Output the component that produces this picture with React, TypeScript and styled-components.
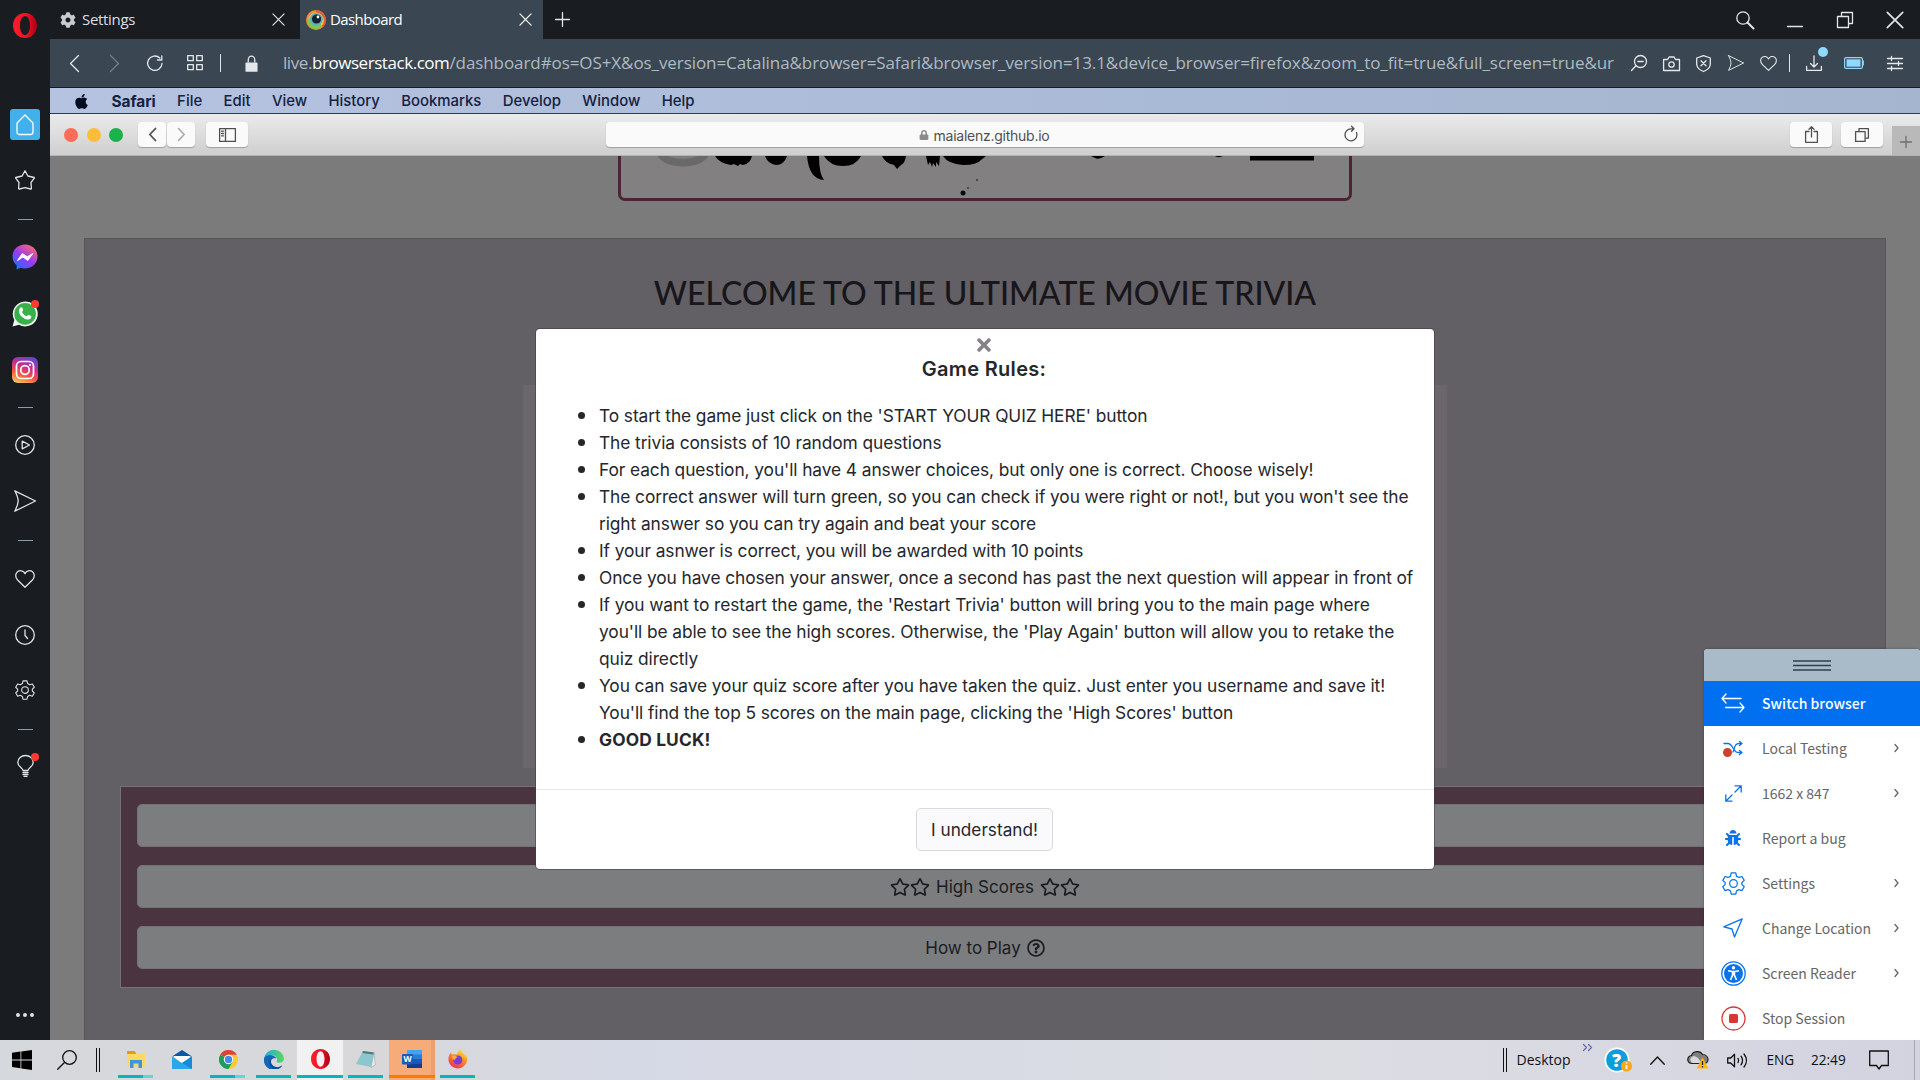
import React from "react";
import styled, { createGlobalStyle, css } from "styled-components";
import { FaApple, FaBug, FaCog, FaLock, FaRegQuestionCircle, FaRegStar, FaTimes } from "react-icons/fa";

const GlobalStyle = createGlobalStyle`
  * { box-sizing: border-box; }
  html, body { margin: 0; padding: 0; overflow: hidden; }
  svg { display: block; flex: none; }
`;

const segoe = `"Open Sans", "Noto Sans", sans-serif`;
const mac = `Inter, "Liberation Sans", sans-serif`;

/* ---------- shell ---------- */

const Screen = styled.div`
  width: 1920px;
  height: 1080px;
  display: flex;
  flex-direction: column;
  overflow: hidden;
  background: #191d21;
  font-family: ${segoe};
`;
const Main = styled.div`
  display: flex;
  height: 1040px;
`;
const Browser = styled.div`
  flex: 1;
  min-width: 0;
  display: flex;
  flex-direction: column;
`;
const Line = styled.svg`
  fill: none;
  stroke: currentColor;
  stroke-width: 1.3;
  stroke-linecap: round;
  stroke-linejoin: round;
  overflow: visible;
`;

/* ---------- opera rail ---------- */

const Rail = styled.nav`
  width: 50px;
  display: flex;
  flex-direction: column;
  align-items: center;
  background: #191d21;
  color: #dfe3e6;
`;
const RailSlot = styled.div<{ $gap: number }>`
  position: relative;
  width: 30px;
  height: 30px;
  flex: none;
  margin-top: ${(p) => p.$gap}px;
  display: flex;
  align-items: center;
  justify-content: center;
`;
const RailHome = styled(RailSlot)`
  height: 31px;
  border-radius: 3px;
  background: #42b0ea;
  color: #fff;
`;
const RailMore = styled(RailSlot)`
  margin-top: auto;
  margin-bottom: 10px;
`;
const RailRule = styled.div<{ $gap: number }>`
  width: 15px;
  height: 2px;
  flex: none;
  margin-top: ${(p) => p.$gap}px;
  border-bottom: 1px solid #8b9ca6;
`;
const AlertDot = styled.span<{ $top?: number }>`
  position: absolute;
  right: 1px;
  top: ${(p) => p.$top ?? 0}px;
  width: 8px;
  height: 8px;
  border-radius: 50%;
  background: #ff3b30;
`;

/* ---------- tabs and address bar ---------- */

const TabStrip = styled.div`
  height: 39px;
  display: flex;
  align-items: center;
  color: #e4e6e8;
`;
const Tab = styled.div<{ $active?: boolean }>`
  width: ${(p) => (p.$active ? 243 : 250)}px;
  height: 39px;
  padding: 0 11px 0 ${(p) => (p.$active ? 6 : 10)}px;
  display: flex;
  align-items: center;
  font-size: 15px;
  letter-spacing: ${(p) => (p.$active ? -0.6 : -0.32)}px;
  color: ${(p) => (p.$active ? "#fff" : "#dcdfe1")};
  background: ${(p) => (p.$active ? "#3a4651" : "#191d21")};
`;
const TabTitle = styled.span<{ $gap: number }>`
  flex: 1;
  margin-left: ${(p) => p.$gap}px;
  padding-bottom: 1px;
`;
const NewTab = styled.div`
  flex: 1;
  padding-left: 12px;
`;
const WindowButtons = styled.div`
  display: flex;
  align-items: center;
  > * { width: 50px; display: flex; justify-content: center; }
`;
const AddressBar = styled.div`
  height: 49px;
  padding: 0 5px;
  display: flex;
  align-items: center;
  background: #3a4651;
  border-bottom: 1px solid #161b20;
  color: #e4e8eb;
`;
const Slot = styled.div<{ $w: number; $dim?: boolean }>`
  position: relative;
  width: ${(p) => p.$w}px;
  flex: none;
  display: flex;
  justify-content: center;
  opacity: ${(p) => (p.$dim ? 0.35 : 1)};
`;
const Separator = styled.div`
  width: 1px;
  height: 18px;
  background: #dfe3e6;
`;
const Url = styled.div`
  flex: 1;
  min-width: 0;
  overflow: hidden;
  white-space: nowrap;
  padding-left: 6px;
  font-size: 17px;
  line-height: 26px;
  letter-spacing: -0.08px;
  color: #afbac3;
`;
const UrlScheme = styled.span`
  letter-spacing: -0.42px;
`;
const UrlHost = styled.span`
  letter-spacing: -0.45px;
  color: #fff;
`;
const DownloadDot = styled.span`
  position: absolute;
  right: 6px;
  top: -8px;
  width: 10px;
  height: 10px;
  border-radius: 50%;
  background: #8fd8ff;
`;

/* ---------- mac desktop ---------- */

const MacMenu = styled.div`
  height: 26px;
  padding: 1px 0 0 23px;
  display: flex;
  align-items: center;
  gap: 21.4px;
  background: linear-gradient(90deg, #b6c3e0, #a9bad6 60%, #a6b5cf);
  border-bottom: 1px solid #2c3c56;
  color: #142140;
  font: 500 14.9px ${mac};
`;
const MacAppName = styled.span`
  font-weight: 700;
  font-size: 15.4px;
`;
const SafariBar = styled.div`
  height: 42px;
  display: flex;
  align-items: center;
  background: linear-gradient(#ebebeb, #cfcfcf);
  border-bottom: 1px solid #b4b4b4;
  color: #505052;
`;
const Lights = styled.div`
  display: flex;
  gap: 8.5px;
  margin-left: 14px;
`;
const Light = styled.span<{ $c: string }>`
  width: 14px;
  height: 14px;
  border-radius: 50%;
  background: ${(p) => p.$c};
`;
const MacButton = styled.div<{ $w: number; $ml: number; $dim?: boolean }>`
  width: ${(p) => p.$w}px;
  height: 25px;
  margin-left: ${(p) => p.$ml}px;
  display: flex;
  align-items: center;
  justify-content: center;
  border-radius: 4px;
  background: #fafafa;
  box-shadow: 0 1px 1px rgba(0, 0, 0, 0.25);
  color: ${(p) => (p.$dim ? "#aaaaaa" : "#505052")};
`;
const SafariField = styled(MacButton)`
  flex: none;
  position: relative;
  gap: 5px;
  padding: 1px 2px 0 0;
  font: 14px ${mac};
  letter-spacing: -0.25px;
`;
const FieldReload = styled.span`
  position: absolute;
  right: 6px;
  top: 4px;
`;
const MacNewTab = styled.div`
  width: 28px;
  height: 29px;
  margin-left: 9px;
  padding-top: 2px;
  align-self: flex-end;
  display: flex;
  align-items: center;
  justify-content: center;
  background: #b9b9ba;
  color: #6e6e6e;
`;

/* ---------- page behind the dialog ---------- */

const Page = styled.div`
  position: relative;
  height: 884px;
  overflow: hidden;
  padding: 0 34px;
  display: flex;
  flex-direction: column;
  align-items: center;
  background: #7b7b7b;
`;
const LogoBox = styled.div`
  width: 734px;
  height: 45px;
  flex: none;
  overflow: hidden;
  background: #828081;
  border: 3px solid #4b2535;
  border-top: 0;
  border-radius: 0 0 7px 7px;
`;
const Board = styled.section`
  width: 1802px;
  height: 820px;
  flex: none;
  margin-top: 37px;
  padding: 0 35px;
  display: flex;
  flex-direction: column;
  align-items: center;
  background: #625f65;
  border: 1px solid #57545a;
`;
const Title = styled.h1`
  margin: 30px 0 0;
  height: 48px;
  font: 500 32px/48px Lato, sans-serif;
  color: #17161a;
  white-space: nowrap;
`;
const Picture = styled.div`
  width: 924px;
  height: 383px;
  margin-top: 68px;
  background: #6b666c;
`;
const Choices = styled.div`
  width: 1730px;
  height: 202px;
  margin-top: 18px;
  padding: 17px 16px;
  display: flex;
  flex-direction: column;
  gap: 18px;
  background: #4a3440;
  border: 1px solid #757177;
`;
const Choice = styled.div`
  height: 43px;
  padding-top: 1px;
  display: flex;
  align-items: center;
  justify-content: center;
  gap: 6px;
  border-radius: 5px;
  background: #7c7d7f;
  font: 17px ${mac};
  color: #1b1c20;
  border: 1px solid #737377;
`;
const Stars = styled.span`
  display: flex;
`;

/* ---------- rules dialog ---------- */

const Dialog = styled.div`
  position: absolute;
  left: 486px;
  top: 173px;
  width: 898px;
  height: 540px;
  display: flex;
  flex-direction: column;
  background: #fff;
  border-radius: 4px;
  box-shadow: 0 0 0 1px rgba(60, 58, 62, 0.5);
  color: #25272c;
  font-family: ${mac};
`;
const DialogClose = styled.div`
  height: 23px;
  padding: 6px 2px 0 0;
  display: flex;
  justify-content: center;
  color: #858387;
`;
const DialogTitle = styled.h2`
  margin: 1px 2px 0 0;
  text-align: center;
  font: 600 20px/32px ${mac};
  letter-spacing: 0.32px;
`;
const Rules = styled.ul`
  margin: 17px 0 0;
  padding: 0 0 0 63px;
  font-size: 17.35px;
  line-height: 27px;
  letter-spacing: -0.09px;
  white-space: pre-line;
  list-style: none;
`;
const Rule = styled.li<{ $strong?: boolean }>`
  display: flex;
  font-weight: ${(p) => (p.$strong ? 700 : 400)};
  letter-spacing: ${(p) => (p.$strong ? "0.15px" : "inherit")};
  &::before {
    content: "";
    width: 7px;
    height: 7px;
    flex: none;
    margin: 10px 14px 0 -21px;
    border-radius: 50%;
    background: #25272c;
  }
`;
const DialogFooter = styled.div`
  height: 80px;
  margin-top: auto;
  padding-right: 1px;
  display: flex;
  align-items: center;
  justify-content: center;
  border-top: 1px solid #e9e9ea;
`;
const Understand = styled.button`
  width: 137px;
  height: 43px;
  padding: 0;
  border: 1px solid #d9d9dc;
  border-radius: 5px;
  background: #fafafc;
  color: #25272c;
  font: 17.2px ${mac};
`;

/* ---------- session menu ---------- */

const Session = styled.aside`
  position: absolute;
  right: 0;
  top: 493px;
  width: 216px;
  height: 391px;
  overflow: hidden;
  border-radius: 4px 4px 0 0;
  background: #fff;
  box-shadow: 0 0 3px rgba(0, 0, 0, 0.3);
  font-family: "Noto Sans CJK SC", "Noto Sans", sans-serif;
`;
const Grip = styled.div`
  height: 32px;
  display: flex;
  align-items: center;
  justify-content: center;
  background: #a9bac8;
  color: #2e404e;
`;
const SessionRow = styled.div<{ $active?: boolean }>`
  height: 45px;
  padding: 0 21px 1px 16px;
  display: flex;
  align-items: center;
  font-size: 14px;
  color: #666;
  ${(p) =>
    p.$active &&
    css`
      background: #0070f0;
      color: #fff;
      font-weight: 500;
    `}
`;
const SessionIcon = styled.span<{ $c: string }>`
  position: relative;
  width: 26px;
  margin-right: 16px;
  display: flex;
  justify-content: center;
  color: ${(p) => p.$c};
`;
const SessionLabel = styled.span`
  flex: 1;
  white-space: nowrap;
`;
const OfflineDot = styled.span`
  position: absolute;
  left: 3px;
  bottom: -2px;
  width: 9px;
  height: 9px;
  border-radius: 50%;
  background: #d0402f;
`;

/* ---------- taskbar ---------- */

const Taskbar = styled.footer`
  height: 40px;
  display: flex;
  align-items: center;
  background: linear-gradient(90deg, #d5d8dc, #d8d8da 20%, #d5d9e5 32%, #dcdde3 70%, #d3d3e0);
  color: #111;
`;
const TaskButton = styled.div<{ $state?: "open" | "many" | "active" | "alert" }>`
  position: relative;
  width: 46px;
  height: 40px;
  padding-bottom: 2px;
  display: flex;
  align-items: center;
  justify-content: center;
  background: ${(p) => (p.$state === "active" ? "#f1f1f2" : p.$state === "alert" ? "#f7ab78" : "none")};
  box-shadow: ${(p) => (p.$state === "alert" ? "inset -4px 0 0 #eda06d" : "none")};
  &::after {
    content: "";
    display: ${(p) => (p.$state ? "block" : "none")};
    position: absolute;
    bottom: 2px;
    left: ${(p) => (p.$state === "active" || p.$state === "alert" ? 0 : 5)}px;
    right: ${(p) => (p.$state === "active" || p.$state === "alert" ? 0 : 6)}px;
    height: 3px;
    background: ${(p) =>
      p.$state === "alert" ? "#ff7800" : p.$state === "many" ? "linear-gradient(90deg,#00b6c1 72%,#62d4da 72%)" : "#00b6c1"};
  }
`;
const DoubleBar = styled.div`
  width: 4px;
  height: 24px;
  border: solid #111;
  border-width: 0 1px;
`;
const Tray = styled.div`
  margin-left: auto;
  display: flex;
  align-items: center;
  font-size: 14px;
`;
const TrayText = styled.span<{ $w: number; $small?: boolean }>`
  width: ${(p) => p.$w}px;
  padding-bottom: 1px;
  font-size: ${(p) => (p.$small ? 13.6 : 14)}px;
  white-space: nowrap;
`;
const Chevrons = styled.span`
  width: 18px;
  align-self: flex-start;
  padding-top: 4px;
  color: #6b68b0;
`;
const DesktopEdge = styled.div`
  width: 6px;
  height: 40px;
  border-left: 1px solid #a9a9b6;
`;

/* ---------- shared drawings ---------- */

const Heart = ({ s = 20 }: { s?: number }) => (
  <Line width={s} height={s} viewBox="0 0 20 20"><path d="M10 18.2 2.6 11C0 8.200 .2 4.700 2.500 2.800 5 .8 8.500 1.600 10 4.600 11.500 1.600 15 .8 17.500 2.800 19.800 4.700 20 8.200 17.400 11Z" /></Line>
);
const Send = ({ s = 22 }: { s?: number }) => (
  <Line width={s} height={s} viewBox="0 0 22 22"><path d="M.8.8 21.500 11 .8 21.200Q4 15 4.200 11 4 7 .8.8Z" /></Line>
);
const Cross = ({ s }: { s: number }) => (
  <Line width={s} height={s} viewBox="0 0 14 14"><path d="M1 1 13 13M13 1 1 13" /></Line>
);
const Gear = ({ s }: { s: number }) => (
  <Line width={s} height={s} viewBox="0 0 24 24"><circle cx="12" cy="12" r="4" /><path d="M9.600 1h4.800l.7 3.300 2.500 1.400 3.200-1 2.400 4-2.400 2.200v2.300l2.400 2.200-2.400 4-3.200-1-2.500 1.400-.7 3.200H9.600l-.7-3.200-2.500-1.400-3.200 1-2.400-4 2.400-2.200v-2.300L.8 8.700l2.400-4 3.200 1 2.500-1.400Z" /></Line>
);
const OperaMark = ({ w, h }: { w: number; h: number }) => (
  <svg width={w} height={h} viewBox="0 0 24 30" preserveAspectRatio="none">
    <defs><linearGradient id="op" x1="0" x2="1"><stop offset="0" stopColor="#ff1b2d" /><stop offset=".55" stopColor="#f01424" /><stop offset="1" stopColor="#a70014" /></linearGradient></defs>
    <path fillRule="evenodd" fill="url(#op)" d="M12 0C5.400 0 0 6.500 0 15s5.400 15 12 15 12-6.500 12-15S18.600 0 12 0Zm0 3.500c3 0 5 5 5 11.500s-2 11.500-5 11.500S7 21.500 7 15 9 3.500 12 3.500Z" />
  </svg>
);
const Lock = ({ w, h }: { w: number; h: number }) => (
  <svg width={w} height={h} viewBox="0 0 14 18" fill="none"><rect x=".5" y="8" width="13" height="10" rx="1" fill="currentColor" /><path d="M3.500 8V5a3.500 4 0 0 1 7 0v3" stroke="currentColor" strokeWidth="1.400" /></svg>
);

const rules: string[] = [
  "To start the game just click on the 'START YOUR QUIZ HERE' button",
  "The trivia consists of 10 random questions",
  "For each question, you'll have 4 answer choices, but only one is correct. Choose wisely!",
  "The correct answer will turn green, so you can check if you were right or not!, but you won't see the\nright answer so you can try again and beat your score",
  "If your asnwer is correct, you will be awarded with 10 points",
  "Once you have chosen your answer, once a second has past the next question will appear in front of",
  "If you want to restart the game, the 'Restart Trivia' button will bring you to the main page where\nyou'll be able to see the high scores. Otherwise, the 'Play Again' button will allow you to retake the\nquiz directly",
  "You can save your quiz score after you have taken the quiz. Just enter you username and save it!\nYou'll find the top 5 scores on the main page, clicking the 'High Scores' button",
];

const blue = "#0b73e8";
type Entry = { label: string; icon: React.ReactNode; color?: string; more?: boolean; active?: boolean };
const entries: Entry[] = [
  { label: "Switch browser", active: true, color: "#fff", icon: <Line width="24" height="20" viewBox="0 0 24 20"><path d="M20 5.500H1M5 1 1 5.500 5 10M4.500 14.500H23M19 10l4 4.500-4 4.500" /></Line> },
  { label: "Local Testing", more: true, icon: <><Line width="20" height="14" viewBox="0 0 20 14"><path d="M1 2.500h4C10 2.500 10 11.500 15 11.500h4M10 11C12 6 12 2.500 16 2.500h3M16.500.5l2.500 2-2.500 2M16.500 9.500l2.500 2-2.500 2" /></Line><OfflineDot /></> },
  { label: "1662 x 847", more: true, icon: <Line width="17" height="17" viewBox="0 0 17 17"><path d="M10 .8h6.200V7M16 1 10 7M7 16.200H.8V10M1 16l6-6" /></Line> },
  { label: "Report a bug", icon: <FaBug size={16} /> },
  { label: "Settings", more: true, icon: <Gear s={23} /> },
  { label: "Change Location", more: true, icon: <Line width="20" height="20" viewBox="0 0 20 20"><path d="M19.200.8.8 8.800 9 11l2.500 8Z" /></Line> },
  { label: "Screen Reader", more: true, icon: <svg width="25" height="25" viewBox="0 0 25 25"><circle cx="12.500" cy="12.500" r="11.700" fill="#fff" stroke={blue} strokeWidth="1.300" /><circle cx="12.500" cy="12.500" r="9.500" fill={blue} /><circle cx="12.500" cy="6.800" r="1.700" fill="#fff" /><path d="M7 9.800 11 10.500h3L18 9.800M12.500 10.500V14M11.600 10.500V14L9.500 19M13.400 10.500V14L15.500 19" stroke="#fff" strokeWidth="1.600" fill="none" /></svg> },
  { label: "Stop Session", color: "#d93636", icon: <svg width="25" height="25" viewBox="0 0 25 25"><circle cx="12.500" cy="12.500" r="11.500" fill="none" stroke="currentColor" strokeWidth="1.300" /><rect x="8" y="8" width="9" height="9" rx="1.500" fill="currentColor" /></svg> },
];

const RailIcons = () => (
  <Rail>
    <RailSlot $gap={10}><OperaMark w={24} h={25} /></RailSlot>
    <RailHome $gap={69}><Line width="18" height="22" viewBox="0 0 18 22"><path d="M9 1 16.500 8.500Q17 9 17 10v8q0 2.500-2.500 2.500h-11Q1 20.500 1 18v-8q0-1 .5-1.500Z" /></Line></RailHome>
    <RailSlot $gap={25}><Line width="20" height="20" viewBox="0 0 20 20"><path d="M10 .8 12.900 6l6.300 1.500q.4.300.1.700L16 12.500l.4 6q-.2.700-.8.500L10 17.600 4.400 19q-.6.200-.8-.5l.4-6L.7 8.200Q.4 7.800.8 7.500L7.100 6Z" /></Line></RailSlot>
    <RailRule $gap={23} />
    <RailSlot $gap={22}>
      <svg width="26" height="26" viewBox="0 0 26 26"><defs><linearGradient id="ms" x1=".1" y1="1" x2=".8" y2="0"><stop offset="0" stopColor="#087bff" /><stop offset=".5" stopColor="#9a38f5" /><stop offset="1" stopColor="#ff6a68" /></linearGradient></defs><path d="M13 .5C5.800.5.500 5.700.5 12.500c0 3.600 1.500 6.700 4.200 8.800v4.200l4-1.800c1.300.5 2.800.8 4.300.8 7.200 0 12.500-5.200 12.500-12S20.200.5 13 .5Z" fill="url(#ms)" /><path d="m5.500 16.500 4.800-7 5 3.300 5.400-3.300-4.800 7-5-3.500Z" fill="#fff" stroke="#fff" /></svg>
    </RailSlot>
    <RailSlot $gap={27}>
      <svg width="26" height="26" viewBox="0 0 26 26"><path d="M.5 25.500 2.300 19A12.500 12.500 0 1 1 7 23.800Z" fill="#f2f4f3" /><circle cx="13.100" cy="12.900" r="10.800" fill="#37b24a" /><path d="M8.500 6.500c1-.5 1.600-.3 2 .8l.7 1.900-1.200 1.700c1 2.100 2.700 3.600 4.800 4.300l1.500-1.500 3 1.400c.3 2.500-1.500 3.700-3.700 3.500C11 18 7 13.500 6.900 10.200c0-1.600.6-3 1.600-3.700Z" fill="#fff" /></svg>
      <AlertDot $top={1} />
    </RailSlot>
    <RailSlot $gap={26}>
      <svg width="26" height="26" viewBox="0 0 26 26"><defs><linearGradient id="ig" x1=".2" y1="1" x2=".6" y2="0"><stop offset="0" stopColor="#fdc75c" /><stop offset=".35" stopColor="#f2583f" /><stop offset=".65" stopColor="#c52e92" /><stop offset="1" stopColor="#6a45c4" /></linearGradient></defs><rect width="26" height="26" rx="6" fill="url(#ig)" /><rect x="4.500" y="4.500" width="17" height="17" rx="4.500" fill="none" stroke="#fff" strokeWidth="1.700" /><circle cx="13" cy="13" r="4.300" fill="none" stroke="#fff" strokeWidth="1.700" /><circle cx="18" cy="8" r="1.100" fill="#fff" /></svg>
    </RailSlot>
    <RailRule $gap={21} />
    <RailSlot $gap={22}><Line width="20" height="20" viewBox="0 0 20 20"><circle cx="10" cy="10" r="9.300" /><path d="M7.200 6.200v7.600l7.300-3.800Z" /></Line></RailSlot>
    <RailSlot $gap={26}><Send /></RailSlot>
    <RailRule $gap={23} />
    <RailSlot $gap={23}><Heart /></RailSlot>
    <RailSlot $gap={26}><Line width="20" height="20" viewBox="0 0 20 20"><circle cx="10" cy="10" r="9.300" /><path d="M10 5v5.500l2.500 3" /></Line></RailSlot>
    <RailSlot $gap={25}><Gear s={20} /></RailSlot>
    <RailRule $gap={23} />
    <RailSlot $gap={21}>
      <Line width="17" height="22" viewBox="0 0 17 22"><path d="M6 15.500C5.500 12.500.8 11.500.8 7.500a7.700 7 0 0 1 15.400 0c0 4-4.700 5-5.200 8ZM6 17.500h5M6 19.500h5M7 21.300h3" /></Line>
      <AlertDot $top={2} />
    </RailSlot>
    <RailMore $gap={0}><svg width="20" height="6" viewBox="0 0 20 6" fill="currentColor"><circle cx="3" cy="3" r="2" /><circle cx="10" cy="3" r="2" /><circle cx="17" cy="3" r="2" /></svg></RailMore>
  </Rail>
);

const TopBars = () => (
  <>
    <TabStrip>
      <Tab>
        <FaCog size={16} color="#c9cccf" />
        <TabTitle $gap={6}>Settings</TabTitle>
        <Slot $w={22}><Cross s={13} /></Slot>
      </Tab>
      <Tab $active>
        <svg width="20" height="20" viewBox="0 0 20 20"><circle cx="10" cy="10" r="10" fill="#f28b36" /><path d="M10 0a10 10 0 0 1 7 17L10 10Z" fill="#e45b38" /><circle cx="10" cy="10.500" r="7.900" fill="#f7c344" /><path d="M3 8a7.500 7.500 0 0 0 13 7.500L10 9Z" fill="#86c34a" /><circle cx="10.300" cy="9.300" r="6.400" fill="#4fb5c8" /><circle cx="10.500" cy="9" r="4.600" fill="#17212c" /><circle cx="12" cy="7" r="1.400" fill="#fff" /></svg>
        <TabTitle $gap={4}>Dashboard</TabTitle>
        <Slot $w={14}><Cross s={13} /></Slot>
      </Tab>
      <NewTab><Line width="15" height="15" viewBox="0 0 15 15"><path d="M7.500.5v14M.5 7.500h14" /></Line></NewTab>
      <WindowButtons>
        <span><Line width="18" height="18" viewBox="0 0 18 18"><circle cx="7" cy="7" r="6.200" /><path d="m11.500 11.500 6 6" strokeWidth="2" /></Line></span>
        <span><Line width="16" height="16" viewBox="0 0 16 16"><path d="M.5 14.500h15" /></Line></span>
        <span><Line width="16" height="16" viewBox="0 0 16 16"><path d="M.5 4.500h11v11H.5ZM4.500 4.500v-4h11v11h-4" /></Line></span>
        <span><Cross s={18} /></span>
      </WindowButtons>
    </TabStrip>
    <AddressBar>
      <Slot $w={39}><Line width="9" height="17" viewBox="0 0 9 17"><path d="M8.500.5.5 8.500l8 8" /></Line></Slot>
      <Slot $w={40} $dim><Line width="9" height="17" viewBox="0 0 9 17"><path d="m.5.5 8 8-8 8" /></Line></Slot>
      <Slot $w={41}><Line width="16" height="16" viewBox="0 0 16 16"><path d="M15 8.500A7.200 7.200 0 1 1 12.800 3M14.800.8V5h-4.300" /></Line></Slot>
      <Slot $w={40}><Line width="16" height="16" viewBox="0 0 16 16"><path d="M.7.7h5.600v5H.7ZM9.700.7h5.600v5H9.700ZM.7 9.700h5.600v5H.7ZM9.700 9.700h5.600v5H9.700Z" /></Line></Slot>
      <Slot $w={10}><Separator /></Slot>
      <Slot $w={52}><Lock w={13} h={17} /></Slot>
      <Url>
        <UrlScheme>live.</UrlScheme><UrlHost>browserstack.com</UrlHost>/dashboard#os=OS+X&amp;os_version=Catalina&amp;browser=Safari&amp;browser_version=13.1&amp;device_browser=firefox&amp;zoom_to_fit=true&amp;full_screen=true&amp;ur
      </Url>
      <Slot $w={32.5}><Line width="16" height="16" viewBox="0 0 16 16"><circle cx="9.500" cy="6.500" r="6" /><path d="M6.800 6.500h5.400M5 10.800.5 15.500" /></Line></Slot>
      <Slot $w={32.5}><Line width="17" height="15" viewBox="0 0 17 15"><path d="M.6 3.500h4l1.500-2.500h5L12.500 3.500h4v11H.6Z" /><circle cx="8.500" cy="8.500" r="2.700" /></Line></Slot>
      <Slot $w={32.5}><Line width="15" height="17" viewBox="0 0 15 17"><path d="M7.500.6 14.300 3v6.500q-.5 4.500-6.800 7Q1.200 14 .7 9.500V3ZM5 5.800l5 5M10 5.800l-5 5" /></Line></Slot>
      <Slot $w={32.5}><Send s={16} /></Slot>
      <Slot $w={32.5}><Heart s={17} /></Slot>
      <Slot $w={8}><Separator /></Slot>
      <Slot $w={41}><Line width="16" height="16" viewBox="0 0 16 16"><path d="M8 1v10.500M4.500 8.500 8 12l3.500-3.500M.6 11.500v3.800h14.800v-3.800" /></Line><DownloadDot /></Slot>
      <Slot $w={40}><svg width="20" height="12" viewBox="0 0 20 12"><rect x=".6" y=".6" width="17.800" height="10.800" rx="1.500" fill="none" stroke="#8fd8ff" strokeWidth="1.200" /><rect x="2.500" y="2.300" width="14" height="7.400" fill="#8fd8ff" /><path d="M19.400 3.500v5" stroke="#8fd8ff" /></svg></Slot>
      <Slot $w={41}><Line width="16" height="15" viewBox="0 0 16 15"><path d="M.5 2.500h15M.5 7.500h15M.5 12.500h15M4.500.5v4M11.500 5.500v4M4.500 10.500v4" /></Line></Slot>
    </AddressBar>
  </>
);

const menus = ["File", "Edit", "View", "History", "Bookmarks", "Develop", "Window", "Help"];

const LogoBrush = () => (
  <svg width="728" height="42" viewBox="621 156 728 42">
    <path d="M656 150h54c0 22-54 22-54 0Z" fill="#696969" />
    <path d="M664 150h38c0 12-38 12-38 0Z" fill="#7d7c7c" />
    <path d="M715 156h37q-2 8-9 9l-3-1-2 2-4-2-3 1q-12-2-16-9ZM765 156h22q-3 9-11 9-8-1-11-9ZM807 156h12q0 18 5 24-15-1-17-24ZM824 156h37q-5 10-18 10-13 0-19-10ZM882 156h24q-1 7-5 9l-4 4-3-4q-9-2-12-9ZM926 156h14l-1 10-3-4v5l-3-4-1 4-2-5-2 3ZM943 156h43l-5 4q-4 5-18 5-15-1-20-9ZM1091 156h14q-6 4-10 2ZM1215 156h8q-4 2-7 .5ZM1250 156h64v4.500h-64Z" fill="#020202" />
    <circle cx="963" cy="193" r="2.500" fill="#0b0b0b" /><circle cx="968" cy="188" r=".8" /><circle cx="977" cy="180" r=".8" />
  </svg>
);

const RemoteDesktop = () => (
  <>
    <MacMenu>
      <FaApple size={17} color="#020b20" />
      <MacAppName>Safari</MacAppName>
      {menus.map((m) => <span key={m}>{m}</span>)}
    </MacMenu>
    <SafariBar>
      <Lights><Light $c="#fb6d58" /><Light $c="#fdbd3b" /><Light $c="#19b24b" /></Lights>
      <MacButton $w={28} $ml={15}><Line width="7" height="13" viewBox="0 0 7 13"><path d="M6.500.5.8 6.500l5.700 6" strokeWidth="1.800" /></Line></MacButton>
      <MacButton $w={28} $ml={1} $dim><Line width="7" height="13" viewBox="0 0 7 13"><path d="m.5.5 5.700 6-5.700 6" strokeWidth="1.600" /></Line></MacButton>
      <MacButton $w={42} $ml={11}><Line width="17" height="14" viewBox="0 0 17 14"><path d="M.6.6h15.800v12.800H.6ZM6.500.6v12.800M2.500 3.200h2M2.500 5.500h2M2.500 7.800h2" /></Line></MacButton>
      <SafariField $w={758} $ml={358}>
        <FaLock size={10} color="#8a8a8a" />maialenz.github.io
        <FieldReload><Line width="14" height="16" viewBox="0 0 14 16"><path d="M12.500 6.500A6 6 0 1 1 7 2.800h2.500M7.500.3 10 2.800 7.500 5.300" /></Line></FieldReload>
      </SafariField>
      <MacButton $w={42} $ml={426}><Line width="13" height="17" viewBox="0 0 13 17"><path d="M4 5.500H.6v10.800h11.800V5.500H9M6.500 11V.8M4 3.200 6.500.7 9 3.200" /></Line></MacButton>
      <MacButton $w={42} $ml={9}><Line width="14" height="14" viewBox="0 0 14 14"><path d="M.6 3.600h9.500v9.800H.6ZM4 3.200V.6h9.400v9.600H10.500" /></Line></MacButton>
      <MacNewTab><Line width="12" height="12" viewBox="0 0 12 12"><path d="M6 .5v11M.5 6h11" /></Line></MacNewTab>
    </SafariBar>
    <Page>
      <LogoBox><LogoBrush /></LogoBox>
      <Board>
        <Title>WELCOME TO THE ULTIMATE MOVIE TRIVIA</Title>
        <Picture />
        <Choices>
          <Choice />
          <Choice>
            <Stars><FaRegStar size={20} /><FaRegStar size={20} /></Stars>High Scores<Stars><FaRegStar size={20} /><FaRegStar size={20} /></Stars>
          </Choice>
          <Choice>How to Play <FaRegQuestionCircle size={18} /></Choice>
        </Choices>
      </Board>
      <Dialog>
        <DialogClose><FaTimes size={20} /></DialogClose>
        <DialogTitle>Game Rules:</DialogTitle>
        <Rules>
          {rules.map((r) => <Rule key={r}>{r}</Rule>)}
          <Rule $strong>GOOD LUCK!</Rule>
        </Rules>
        <DialogFooter><Understand>I understand!</Understand></DialogFooter>
      </Dialog>
      <Session>
        <Grip><Line width="38" height="11" viewBox="0 0 38 11"><path d="M0 1h38M0 5.500h38M0 10h38" strokeLinecap="butt" /></Line></Grip>
        {entries.map((e) => (
          <SessionRow key={e.label} $active={e.active}>
            <SessionIcon $c={e.color ?? blue}>{e.icon}</SessionIcon>
            <SessionLabel>{e.label}</SessionLabel>
            {e.more && <Line width="5" height="8" viewBox="0 0 5 8"><path d="m1 .5 3 3.500-3 3.500" /></Line>}
          </SessionRow>
        ))}
      </Session>
    </Page>
  </>
);

const WindowsBar = () => (
  <Taskbar>
    <Slot $w={44}><svg width="20" height="20" viewBox="0 0 20 20"><path d="M0 2.800 8.500 1.600v7.900H0ZM9.300 1.500 20 0v9.500H9.300ZM0 10.400h8.500v7.900L0 17.100ZM9.300 10.400H20V20L9.300 18.500Z" /></svg></Slot>
    <Slot $w={46}><Line width="20" height="20" viewBox="0 0 20 20"><circle cx="12.500" cy="7.500" r="6.800" /><path d="M7.700 12.300.7 19.300" /></Line></Slot>
    <Slot $w={16}><DoubleBar /></Slot>
    <Slot $w={7} />
    <TaskButton $state="many"><svg width="18" height="17" viewBox="0 0 18 17"><path d="M0 0h7.500l1.500 2v4H0Z" fill="#e0a100" /><path d="M0 3h9l1-1h8v13.500H0Z" fill="#ffd763" /><path d="M3 9h12v8h-3.500v-4.500h-5V17H3Z" fill="#3c96dc" /></svg></TaskButton>
    <TaskButton><svg width="20" height="19" viewBox="0 0 20 19"><path d="M0 6.500 10 0l10 6.500Z" fill="#0b57a4" /><path d="M1.500 6h17L10 14Z" fill="#fff" /><path d="M0 6.500 10 13 20 6.500V19H0Z" fill="#28a8ea" /><path d="m10 13 10-6.500V19Z" fill="#1689d8" /></svg></TaskButton>
    <TaskButton $state="many"><svg width="19" height="19" viewBox="0 0 20 20"><path d="M10 10 1.300 5A10 10 0 0 1 18.700 5Z" fill="#dc4437" /><path d="M10 10V5h8.700A10 10 0 0 1 10 20l4-7.700Z" fill="#fdc935" /><path d="M10 10 1.300 5A10 10 0 0 0 10 20l4.300-7.500Z" fill="#1a9f58" /><circle cx="10" cy="10" r="5" fill="#fff" /><circle cx="10" cy="10" r="3.900" fill="#4688f1" /></svg></TaskButton>
    <TaskButton $state="open"><svg width="20" height="20" viewBox="0 0 20 20"><defs><linearGradient id="ed" x1="0" x2="1"><stop offset="0" stopColor="#20a8e8" /><stop offset="1" stopColor="#5bd85c" /></linearGradient></defs><path d="M.2 9A10 10 0 0 1 20 9.500c0 3-2.500 4.300-5 4.300-2 0-3-.8-2.200-2C14 9 11 6 7 6 3.500 6 1 7.500.2 9Z" fill="url(#ed)" /><path d="M.1 9C1 6.800 4 5.800 6.500 6c2.800.2 5.500 1.800 5.500 3.500C8.500 8.500 6.500 11 7 13.500c.6 3 4 5.500 8 4.500l3.300-1.500A10 10 0 0 1 .1 9Z" fill="#1168b8" /><path d="M7 13.500c.6 3 4 5.500 8 4.500l3.300-1.500c-2.500 3-6 4-9.300 3.300C4.500 17 4 11.500 8 8.800 7 10 6.700 12 7 13.500Z" fill="#0b4f9a" /></svg></TaskButton>
    <TaskButton $state="active"><OperaMark w={19} h={20} /></TaskButton>
    <TaskButton $state="open"><svg width="20" height="17" viewBox="0 0 20 17"><path d="m7 0 11 1.500-3 14.500L0 13Z" fill="#8cc6cf" /><path d="m7 0 11 1.500-.6 2L6.300 2Z" fill="#55777d" /><path d="m18 1.500 1.300 12.500-4.300 2.500Z" fill="#e8eef0" stroke="#8c9a9d" strokeWidth=".5" /></svg></TaskButton>
    <TaskButton $state="alert">
      <svg width="20" height="18" viewBox="0 0 20 18"><rect x="5" width="15" height="18" rx="1" fill="#2b7cd3" /><path d="M5 0h15v4.500H5Z" fill="#41a5ee" /><path d="M5 9h15v4.500H5Z" fill="#185abd" /><path d="M5 13.500h15V18H5Z" fill="#103f91" /><rect y="4" width="11" height="10.500" rx="1" fill="#185abd" /><text x="5.500" y="12.400" textAnchor="middle" fontFamily="Open Sans" fontWeight="700" fontSize="8.500" fill="#fff">W</text></svg>
    </TaskButton>
    <TaskButton $state="open"><svg width="20" height="20" viewBox="0 0 20 20"><defs><linearGradient id="ff" x1=".8" y1="0" x2=".2" y2="1"><stop offset="0" stopColor="#fff04a" /><stop offset=".45" stopColor="#ff8a22" /><stop offset="1" stopColor="#f0255e" /></linearGradient></defs><path d="M12.500 0c.4 3 3.300 4 4.300 6.200C17 5.500 17 5 16.800 4.400 19 6.500 19.700 9.500 19 12.500A9.500 9.500 0 0 1 .6 12C0 8.500 1 5.500 3 3.500c.2 1 .6 1.600 1 2C6 5 7.500 5 9 5.600 9.500 3 11 1 12.500 0Z" fill="url(#ff)" /><circle cx="9.800" cy="11" r="4.600" fill="#7b3fd0" /><path d="M4 6.500c2 .5 4 .3 5.500 1.500C8 9 7 9.500 7.200 11c-2.500-.5-4-2-3.200-4.500Z" fill="#ffb02e" /></svg></TaskButton>
    <Tray>
      <DoubleBar />
      <Slot $w={10} />
      <TrayText $w={66}>Desktop</TrayText>
      <Chevrons><Line width="10" height="7" viewBox="0 0 10 7"><path d="m.5.5 3 3-3 3M5.500.5l3 3-3 3" /></Line></Chevrons>
      <Slot $w={34}><svg width="28" height="26" viewBox="0 0 28 26"><circle cx="13" cy="13" r="12.500" fill="#fff" /><circle cx="13" cy="13" r="10.800" fill="#0d9ddb" /><text x="12.500" y="19.500" textAnchor="middle" fontFamily="Open Sans" fontWeight="800" fontSize="18" fill="#fff">?</text><circle cx="22.500" cy="19" r="5.500" fill="#f7a81b" /><path d="M22.500 18v4M22.500 15.500v1.300" stroke="#fff" strokeWidth="1.700" /></svg></Slot>
      <Slot $w={46}><Line width="15" height="9" viewBox="0 0 15 9"><path d="M.7 8.300 7.500 1l6.800 7.300" /></Line></Slot>
      <Slot $w={35}><svg width="22" height="20" viewBox="0 0 22 20"><path d="M5 13.500a4 4 0 0 1-.5-8C6 1 13 0 15.500 4.500c4 .2 5.500 3 5.500 5s-1.500 4-4 4Z" fill="#808080" stroke="#222" strokeWidth="1.200" /><path d="M5.500 12.900a3.500 3.500 0 0 1 0-6.500c3-.5 6 1 8.500 6.500Z" fill="#d8d8d8" /><path d="M15.500 7.500 21.500 18.500H9.500Z" fill="#fdb913" /><path d="M15.500 11v4M15.500 16v1.500" stroke="#222" strokeWidth="1.300" /></svg></Slot>
      <Slot $w={43}><Line width="21" height="15" viewBox="0 0 21 15"><path d="M.7 5h3L7.500 1.200v12.600L3.700 10h-3ZM11 5.500q1.500 2 0 4M14 3.200q3.200 4.300 0 8.600M17 1q5 6.500 0 13" /></Line></Slot>
      <Slot $w={8} />
      <TrayText $w={44.5} $small>ENG</TrayText>
      <TrayText $w={50} $small>22:49</TrayText>
      <Slot $w={36}><Line width="20" height="20" viewBox="0 0 20 20"><path d="M.7 1h18.600v14.500H12.500L10 19l-2.500-3.500H.7Z" /></Line></Slot>
      <Slot $w={17} />
      <DesktopEdge />
    </Tray>
  </Taskbar>
);

export default function App() {
  return (
    <Screen>
      <GlobalStyle />
      <Main>
        <RailIcons />
        <Browser>
          <TopBars />
          <RemoteDesktop />
        </Browser>
      </Main>
      <WindowsBar />
    </Screen>
  );
}
